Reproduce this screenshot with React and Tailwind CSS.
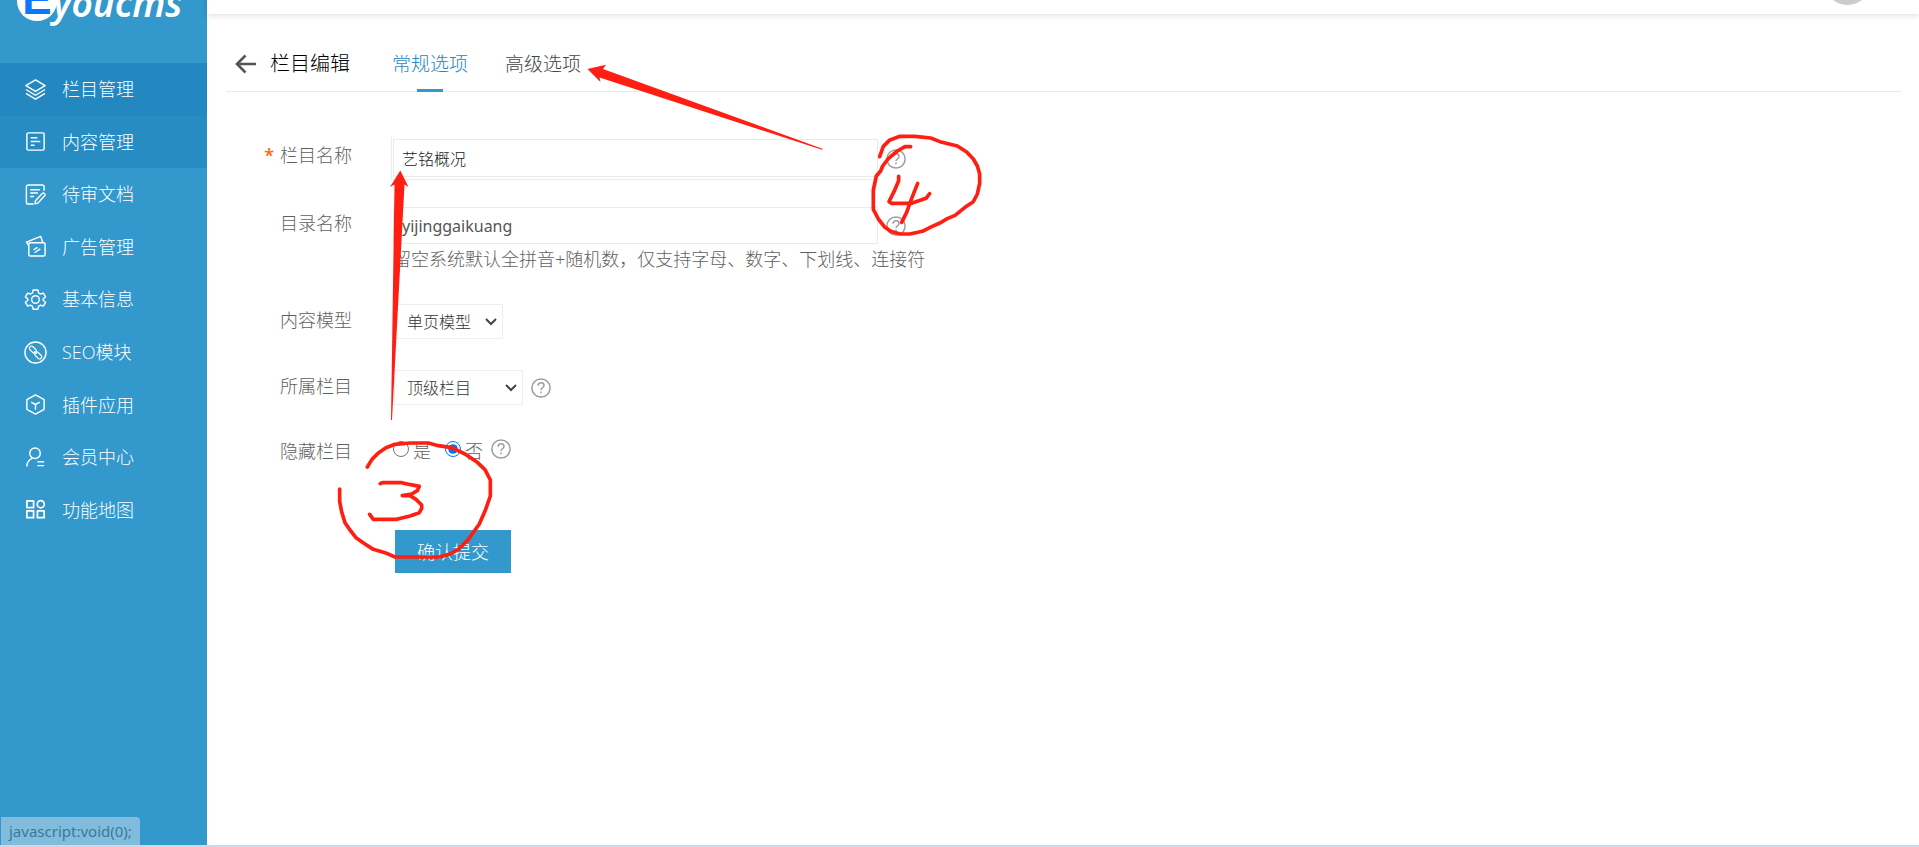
import { useState } from "react";

const ICONS = {
  layers: (
    <>
      <path d="M12 2 22 8 12 14 2 8Z" />
      <path d="M2 12l10 6 10-6" />
      <path d="M2 16l10 6 10-6" />
    </>
  ),
  content: (
    <>
      <rect x="3" y="3" width="18" height="18" rx="1.500" />
      <path d="M7 8h7M7 12h10M7 16h4" />
    </>
  ),
  review: (
    <>
      <path d="M10 22H4.500a2 2 0 0 1-2-2V4a2 2 0 0 1 2-2H19a2 2 0 0 1 2 2v4" />
      <path d="M6.500 7h10M6.500 10.500h8M6.500 14h4" />
      <path d="M12 18.500l7-7.500a1.700 1.700 0 0 1 2.500 2.300L14.500 21l-3 .8z" />
    </>
  ),
  ads: (
    <>
      <rect x="5" y="8" width="17" height="14" rx="1.500" />
      <path d="M5 11 2.500 7.500 17.500 1.500 19.500 7.500" />
      <path d="M10 15.500l4-2.500M11 18.500l6-4" />
    </>
  ),
  gear: (
    <>
      <path d="M9.500 2h5l.7 3.200 2 1.100 3-1 2.300 4L20 11.500v1.200l2.500 2.200-2.300 4-3-1-2 1.200-.7 3h-5l-.7-3-2-1.200-3 1-2.300-4L4 12.700v-1.200L1.500 9.300l2.300-4 3 1 2-1.100z" />
      <circle cx="12" cy="12" r="4" />
    </>
  ),
  link: (
    <>
      <circle cx="12" cy="12" r="11" />
      <g strokeWidth="1.200">
        <rect x="5" y="6.800" width="8.500" height="4.400" rx="2.200" transform="rotate(45 9.250 9)" />
        <rect x="10.500" y="12.800" width="8.500" height="4.400" rx="2.200" transform="rotate(45 14.750 15)" />
        <path d="M10.500 10.500l3 3" />
      </g>
    </>
  ),
  plugin: (
    <>
      <path d="M12 2l9 5v10l-9 5-9-5V7z" />
      <path d="M7.500 9.500 12 12l4.500-2.500M12 12v5.500" />
    </>
  ),
  member: (
    <>
      <circle cx="11.500" cy="7.500" r="5.500" />
      <path d="M3 21.500c0-4.500 2-7 5.500-8.500M14 16.500h7M14 20.500h7" />
    </>
  ),
  map: (
    <g strokeWidth="1.800">
      <rect x="3" y="3" width="7" height="7" />
      <circle cx="17.500" cy="6.500" r="3.700" />
      <rect x="3" y="13.500" width="7" height="7" />
      <rect x="14" y="13.500" width="7" height="7" />
    </g>
  ),
};

const MENU = [
  { label: "栏目管理", icon: "layers", bg: "bg-[#2288bf]" },
  { label: "内容管理", icon: "content", bg: "bg-[#268cc2]" },
  { label: "待审文档", icon: "review" },
  { label: "广告管理", icon: "ads" },
  { label: "基本信息", icon: "gear" },
  { label: "SEO模块", icon: "link" },
  { label: "插件应用", icon: "plugin" },
  { label: "会员中心", icon: "member" },
  { label: "功能地图", icon: "map" },
];

const TABS = ["常规选项", "高级选项"];

function HelpIcon() {
  return (
    <svg
      viewBox="0 0 20 20"
      className="size-5 shrink-0"
      fill="none"
      stroke="#9c9ca2"
      strokeWidth="1.500"
    >
      <circle cx="10" cy="10" r="9.100" />
      <path d="M7 7.800c0-1.900 1.300-3 3-3s3 1.100 3 2.700c0 2.200-3 2.300-3 4.500M10 13.400v1.800" />
    </svg>
  );
}

function Field({ label, htmlFor, required, children }) {
  return (
    <div className="flex items-start">
      <label htmlFor={htmlFor} className="w-[126px] shrink-0 text-right leading-8 text-[#5f5f5f]">
        {required && <span className="mr-1.5 font-semibold text-[#ff6600]">*</span>}
        {label}
      </label>
      <div className="ml-[39px]">{children}</div>
    </div>
  );
}

function SelectBox({ id, options, className }) {
  return (
    <div className="relative">
      <select
        id={id}
        className={`block h-[35px] appearance-none border border-[#eee] bg-white pl-3 text-base text-[#333] outline-none ${className}`}
      >
        {options.map((o) => (
          <option key={o}>{o}</option>
        ))}
      </select>
      <svg
        viewBox="0 0 12 8"
        className="pointer-events-none absolute right-1.5 top-3.5 h-2 w-3"
        fill="none"
        stroke="#444"
        strokeWidth="2"
      >
        <path d="M1 1l5 5 5-5" />
      </svg>
    </div>
  );
}

function Sidebar() {
  return (
    <aside className="w-[207px] shrink-0 bg-[#3398cc] text-white">
      <div className="-mt-10 flex h-[103px] items-start pl-[17px] pt-[21px]">
        <span className="flex size-10 items-end justify-center rounded-full bg-white font-['Liberation_Sans',sans-serif] text-[44px] leading-[44px] font-bold text-[#0a78ff]">
          E
        </span>
        <span className="-ml-1 font-['Noto_Sans',sans-serif] text-[37px] leading-[44px] font-semibold italic">
          youcms
        </span>
      </div>
      <nav className="grid h-[473px] auto-rows-fr">
        {MENU.map((item) => (
          <a
            key={item.label}
            href="#"
            className={`flex items-center gap-[15px] pl-6 ${item.bg || ""}`}
          >
            <svg
              viewBox="0 0 24 24"
              className="size-[23px]"
              fill="none"
              stroke="currentColor"
              strokeWidth="1.500"
              strokeLinejoin="round"
            >
              {ICONS[item.icon]}
            </svg>
            {item.label}
          </a>
        ))}
      </nav>
    </aside>
  );
}

// Hand-drawn markers laid over the page
function Annotations() {
  return (
    <svg className="pointer-events-none absolute left-0 top-0 h-[600px] w-[1010px]" viewBox="0 0 1010 600">
      <g fill="#ff1f12">
        <path d="M587.500 69 606 64.700 603 69 823 149 822 149.700 599.500 77.500 600.500 82Z" />
        <path d="M400.300 170.500 408.500 187 404.500 184.500 392 420H391L394.500 184.500 390 187Z" />
      </g>
      <g
        fill="none"
        stroke="#ff1f12"
        strokeWidth="11"
        strokeLinecap="round"
        strokeLinejoin="round"
      >
        <g transform="translate(250 360) scale(.33333)">
          <path d="M352 321 366 298 385 279 408 263 435 253 480 249H535L560 256 605 263 645 282 682 307 705 329 721 360V408L706 451 688 492 655 538 625 568 600 582 568 591H435L405 578 370 568 345 552 318 533 300 510 285 488 275 455 269 425V387" />
          <path d="M391 371 397 368H455L482 374 508 379 502 392 485 402 457 407H480L498 418 515 435V445L508 458 480 468 440 478H370L359 463" />
        </g>
        <g transform="translate(840 120) scale(.33333)">
          <path d="M119 110 130 79 148 61 180 49H225L272 54 300 65 352 78 380 96 400 117 412 138 419 162V190L412 222 400 245 375 262 345 286 322 296 300 309 275 320 247 334 210 342H180L152 334 133 320 115 297 100 268V210L109 168 122 153 128 138 145 116 172 93 195 80H212" />
          <path d="M176 169V182L162 215 147 245 155 250H215L258 235 269 221" />
          <path d="M233 190 215 235 200 277 185 307" />
        </g>
      </g>
    </svg>
  );
}

export default function App() {
  const [tab, setTab] = useState(TABS[0]);
  const [hidden, setHidden] = useState("否");

  return (
    <div className="relative flex h-screen flex-col overflow-hidden bg-white font-['Open_Sans','Noto_Sans_CJK_SC',sans-serif] text-lg font-light">
      <div className="flex min-h-0 flex-1">
        <Sidebar />
        <div className="min-w-0 flex-1">
          <header className="-mt-[42px] flex h-14 items-start justify-end pr-12 shadow-[0_1px_6px_rgba(0,0,0,0.15)]">
            <span className="size-[47px] rounded-full bg-[#ccc]" />
          </header>

          <main className="ml-[19px] mr-[18px]">
            <div className="flex h-[78px] items-end border-b border-[#eaeaea]">
              <a href="#" aria-label="返回" className="mb-[17px] ml-[9px]">
                <svg
                  viewBox="0 0 22 20"
                  className="h-5 w-[22px]"
                  fill="none"
                  stroke="#555"
                  strokeWidth="2.600"
                >
                  <path d="M10.500 1.500 2 10l8.500 8.500M2 10h19" />
                </svg>
              </a>
              <h1 className="mb-[11px] ml-[13px] text-xl leading-8 text-black">栏目编辑</h1>
              <div className="ml-[42px] flex gap-[37px]">
                {TABS.map((t) => (
                  <button
                    key={t}
                    type="button"
                    onClick={() => setTab(t)}
                    className={`-mb-px flex flex-col items-center text-[19px] leading-8 ${
                      tab === t ? "text-[#2388c0]" : "text-[#444]"
                    }`}
                  >
                    {t}
                    <span className={`mt-[9px] h-[3px] w-[26px] ${tab === t ? "bg-[#3398cc]" : ""}`} />
                  </button>
                ))}
              </div>
            </div>

            <form className="pt-[47px]" onSubmit={(e) => e.preventDefault()}>
              <Field label="栏目名称" htmlFor="typename" required>
                <div className="-mt-0.5 flex items-center gap-2">
                  <div className="border-b border-l border-[#dff0f8] py-0.5 pl-px">
                    <input
                      id="typename"
                      defaultValue="艺铭概况"
                      className="block h-[38px] w-[485px] border border-[#eaeaea] px-2 text-base text-[#222] outline-none"
                    />
                  </div>
                  <HelpIcon />
                </div>
              </Field>

              <div className="mt-[27px]">
                <Field label="目录名称" htmlFor="dirname">
                  <div className="flex items-center gap-2 pl-0.5">
                    <input
                      id="dirname"
                      defaultValue="yijinggaikuang"
                      className="block h-[37px] w-[485px] border border-[#eaeaea] px-2 font-['Noto_Sans',sans-serif] text-base font-normal text-[#555] outline-none"
                    />
                    <HelpIcon />
                  </div>
                  <p className="pl-0.5 leading-[30px] text-[#5f5f5f]">
                    留空系统默认全拼音+随机数，仅支持字母、数字、下划线、连接符
                  </p>
                </Field>
              </div>

              <div className="mt-[30px]">
                <Field label="内容模型" htmlFor="model">
                  <div className="pl-[3px]">
                    <SelectBox id="model" options={["单页模型"]} className="w-[109px]" />
                  </div>
                </Field>
              </div>

              <div className="mt-[31px]">
                <Field label="所属栏目" htmlFor="parent">
                  <div className="flex items-center gap-2 pl-[3px]">
                    <SelectBox id="parent" options={["顶级栏目"]} className="w-[129px]" />
                    <HelpIcon />
                  </div>
                </Field>
              </div>

              <div className="mt-[30px]">
                <Field label="隐藏栏目">
                  <div className="flex items-start gap-2 pl-0.5 text-[#5f5f5f]">
                    <div className="flex gap-3.5">
                      {["是", "否"].map((v) => (
                        <label key={v} className="flex items-start gap-1">
                          <input
                            type="radio"
                            name="hidden"
                            checked={hidden === v}
                            onChange={() => setHidden(v)}
                            className="mt-1.5 size-4"
                          />
                          <span className="leading-8">{v}</span>
                        </label>
                      ))}
                    </div>
                    <div className="pt-1">
                      <HelpIcon />
                    </div>
                  </div>
                </Field>
              </div>

              <button type="submit" className="ml-[169px] mt-[63px] h-[43px] bg-[#3398cc] px-[22px] text-white">
                确认提交
              </button>
            </form>
          </main>
        </div>
      </div>

      <div className="h-0.5 bg-[#cbd9ea]" />
      <div className="absolute bottom-0.5 left-px rounded-tr bg-[#81bcdc] px-2 font-['Noto_Sans',sans-serif] text-[15px] leading-7 font-normal text-[#39789c]">
        javascript:void(0);
      </div>

      <Annotations />
    </div>
  );
}
